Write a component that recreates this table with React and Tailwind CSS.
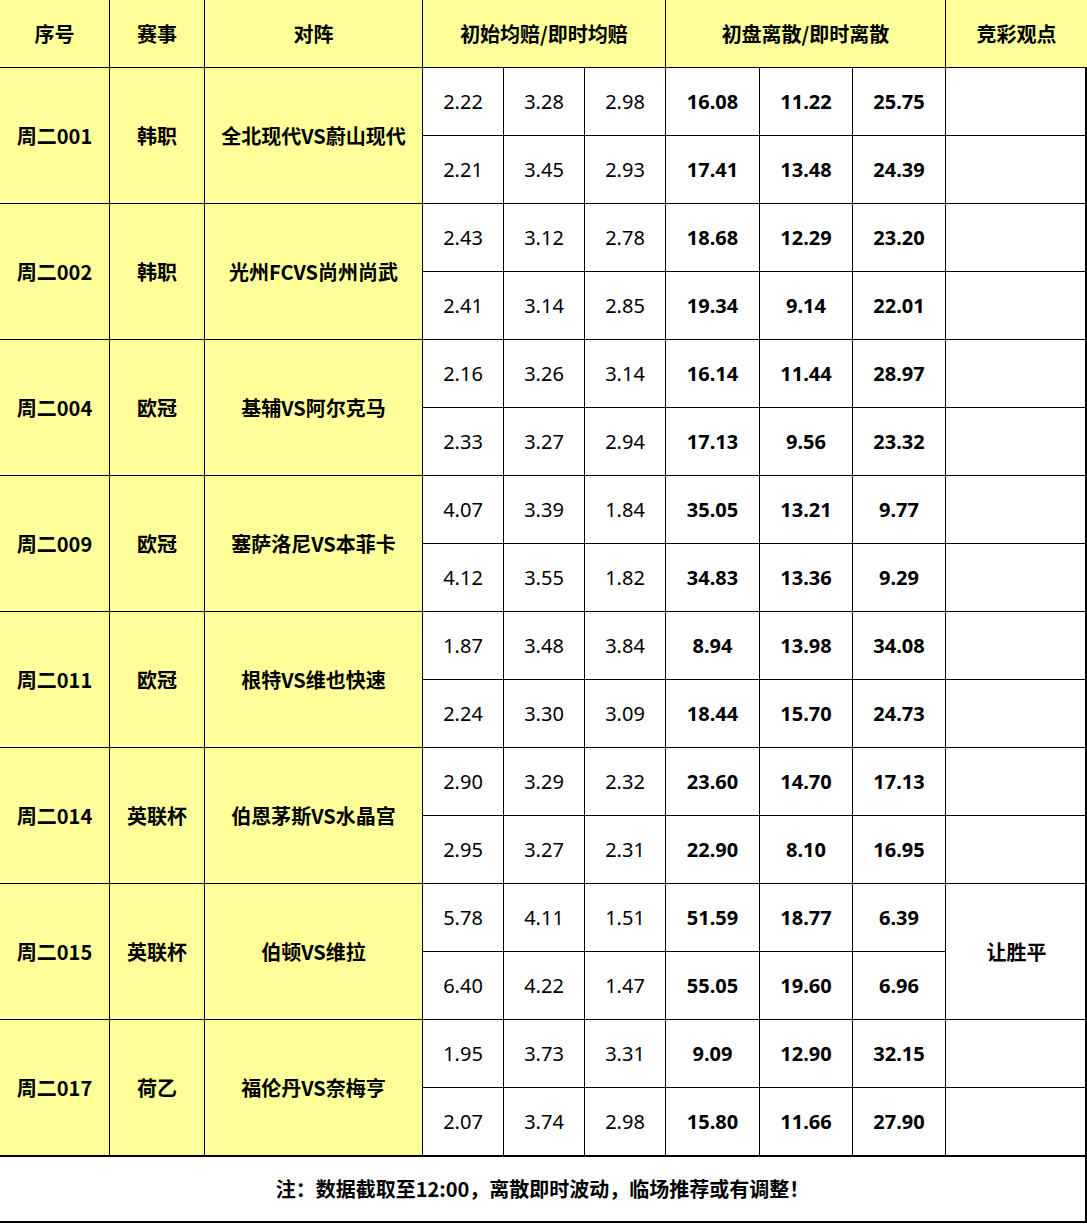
import React from 'react';

const matches = [
  { no: '周二001', league: '韩职', vs: '全北现代VS蔚山现代', odds: [['2.22', '3.28', '2.98', '16.08', '11.22', '25.75'], ['2.21', '3.45', '2.93', '17.41', '13.48', '24.39']] },
  { no: '周二002', league: '韩职', vs: '光州FCVS尚州尚武', odds: [['2.43', '3.12', '2.78', '18.68', '12.29', '23.20'], ['2.41', '3.14', '2.85', '19.34', '9.14', '22.01']] },
  { no: '周二004', league: '欧冠', vs: '基辅VS阿尔克马', odds: [['2.16', '3.26', '3.14', '16.14', '11.44', '28.97'], ['2.33', '3.27', '2.94', '17.13', '9.56', '23.32']] },
  { no: '周二009', league: '欧冠', vs: '塞萨洛尼VS本菲卡', odds: [['4.07', '3.39', '1.84', '35.05', '13.21', '9.77'], ['4.12', '3.55', '1.82', '34.83', '13.36', '9.29']] },
  { no: '周二011', league: '欧冠', vs: '根特VS维也快速', odds: [['1.87', '3.48', '3.84', '8.94', '13.98', '34.08'], ['2.24', '3.30', '3.09', '18.44', '15.70', '24.73']] },
  { no: '周二014', league: '英联杯', vs: '伯恩茅斯VS水晶宫', odds: [['2.90', '3.29', '2.32', '23.60', '14.70', '17.13'], ['2.95', '3.27', '2.31', '22.90', '8.10', '16.95']] },
  { no: '周二015', league: '英联杯', vs: '伯顿VS维拉', view: '让胜平', odds: [['5.78', '4.11', '1.51', '51.59', '18.77', '6.39'], ['6.40', '4.22', '1.47', '55.05', '19.60', '6.96']] },
  { no: '周二017', league: '荷乙', vs: '福伦丹VS奈梅亨', odds: [['1.95', '3.73', '3.31', '9.09', '12.90', '32.15'], ['2.07', '3.74', '2.98', '15.80', '11.66', '27.90']] },
];

const cell = 'flex items-center justify-center border-r border-b border-black';
const yellow = 'bg-[#ffff99]';

function App() {
  return (
    <div className="w-[1087px] h-[1225px] bg-white text-black font-['Noto_Sans_CJK_SC',sans-serif]">
      <div className="grid grid-cols-[110px_95px_218px_81px_81px_81px_94px_93px_93px_141px] auto-rows-[68px] border-r-2 border-black w-[1087px]">
        {/* header */}
        <div className={`${cell} ${yellow} text-[20px] font-bold`}>序号</div>
        <div className={`${cell} ${yellow} text-[20px] font-bold`}>赛事</div>
        <div className={`${cell} ${yellow} text-[20px] font-bold`}>对阵</div>
        <div className={`${cell} ${yellow} col-span-3 text-[20px] font-bold`}>初始均赔/即时均赔</div>
        <div className={`${cell} ${yellow} col-span-3 text-[20px] font-bold`}>初盘离散/即时离散</div>
        <div className={`${cell} ${yellow} text-[20px] font-bold border-r-0`}>竞彩观点</div>

        {matches.map((m) => (
          <React.Fragment key={m.no}>
            <div className={`${cell} ${yellow} row-span-2 text-[20px] font-bold`}>{m.no}</div>
            <div className={`${cell} ${yellow} row-span-2 text-[20px] font-bold`}>{m.league}</div>
            <div className={`${cell} ${yellow} row-span-2 text-[20px] font-bold`}>{m.vs}</div>
            {m.odds.map((row, ri) => (
              <React.Fragment key={ri}>
                {row.map((v, i) => (
                  <div
                    key={i}
                    className={`${cell} text-[20px] font-['Noto_Sans',sans-serif] ${i >= 3 ? 'font-bold' : ''}`}
                  >
                    {v}
                  </div>
                ))}
                {m.view ? (
                  ri === 0 && (
                    <div className={`${cell} row-span-2 border-r-0 text-[20px] font-bold`}>{m.view}</div>
                  )
                ) : (
                  <div className={`${cell} border-r-0`}></div>
                )}
              </React.Fragment>
            ))}
          </React.Fragment>
        ))}
      </div>
      <div className="h-[67px] flex items-center justify-center border-t border-b-2 border-r-2 border-black text-[20px] font-bold">
        注：数据截取至12:00，离散即时波动，临场推荐或有调整！
      </div>
    </div>
  );
}

export default App;
